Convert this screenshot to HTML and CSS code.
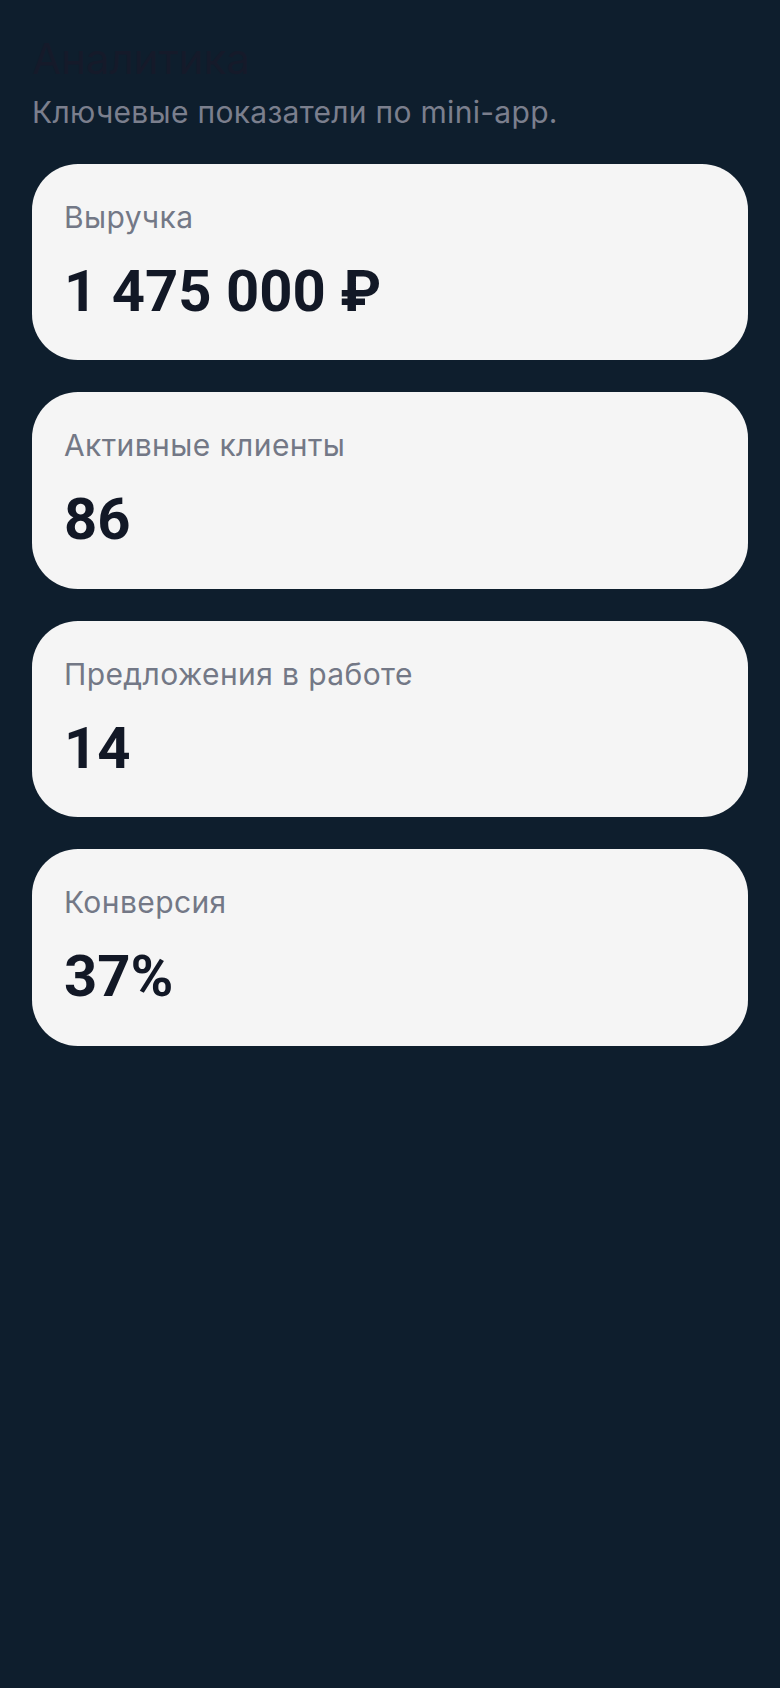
FILE: index.html
```html
<!DOCTYPE html>
<html lang="ru">
<head>
    <meta charset="UTF-8">
    <meta name="viewport" content="width=device-width, initial-scale=1.0">
    <title>Аналитика</title>
    <link rel="stylesheet" href="styles.css">
</head>
<body>
    <div class="page">
        <header class="page-head">
            <h1 class="title">Аналитика</h1>
            <p class="subtitle">Ключевые показатели по mini-app.</p>
        </header>

        <main class="stats">
            <div class="stat-card">
                <div class="stat-label">Выручка</div>
                <div class="stat-value">1 475 000 ₽</div>
            </div>
            <div class="stat-card">
                <div class="stat-label">Активные клиенты</div>
                <div class="stat-value">86</div>
            </div>
            <div class="stat-card">
                <div class="stat-label">Предложения в работе</div>
                <div class="stat-value">14</div>
            </div>
            <div class="stat-card">
                <div class="stat-label">Конверсия</div>
                <div class="stat-value">37%</div>
            </div>
        </main>
    </div>
</body>
</html>
```

FILE: styles.css
```css
* {
    margin: 0;
    padding: 0;
    box-sizing: border-box;
}

body {
    background-color: #0e1e2d;
    font-family: Inter, "Noto Sans", sans-serif;
    min-height: 100vh;
}

.page {
    padding: 32px;
}

.title {
    font-size: 42px;
    font-weight: 400;
    line-height: 1.3;
    color: #151a2a;
    margin-bottom: 6px;
}

.subtitle {
    font-size: 30px;
    line-height: 1.3;
    letter-spacing: 0.3px;
    color: #7b7f8d;
}

.stats {
    display: flex;
    flex-direction: column;
    gap: 32px;
    margin-top: 32px;
}

.stat-card {
    background-color: #f5f5f5;
    border-radius: 46px;
    padding: 34px 32px 34px;
}

.stat-label {
    font-size: 30px;
    line-height: 1.3;
    letter-spacing: 0.4px;
    color: #737886;
}

.stat-value {
    margin-top: 20px;
    font-family: Roboto, "Liberation Sans", sans-serif;
    font-size: 58px;
    font-weight: 700;
    line-height: 1.2;
    color: #121826;
}
```
